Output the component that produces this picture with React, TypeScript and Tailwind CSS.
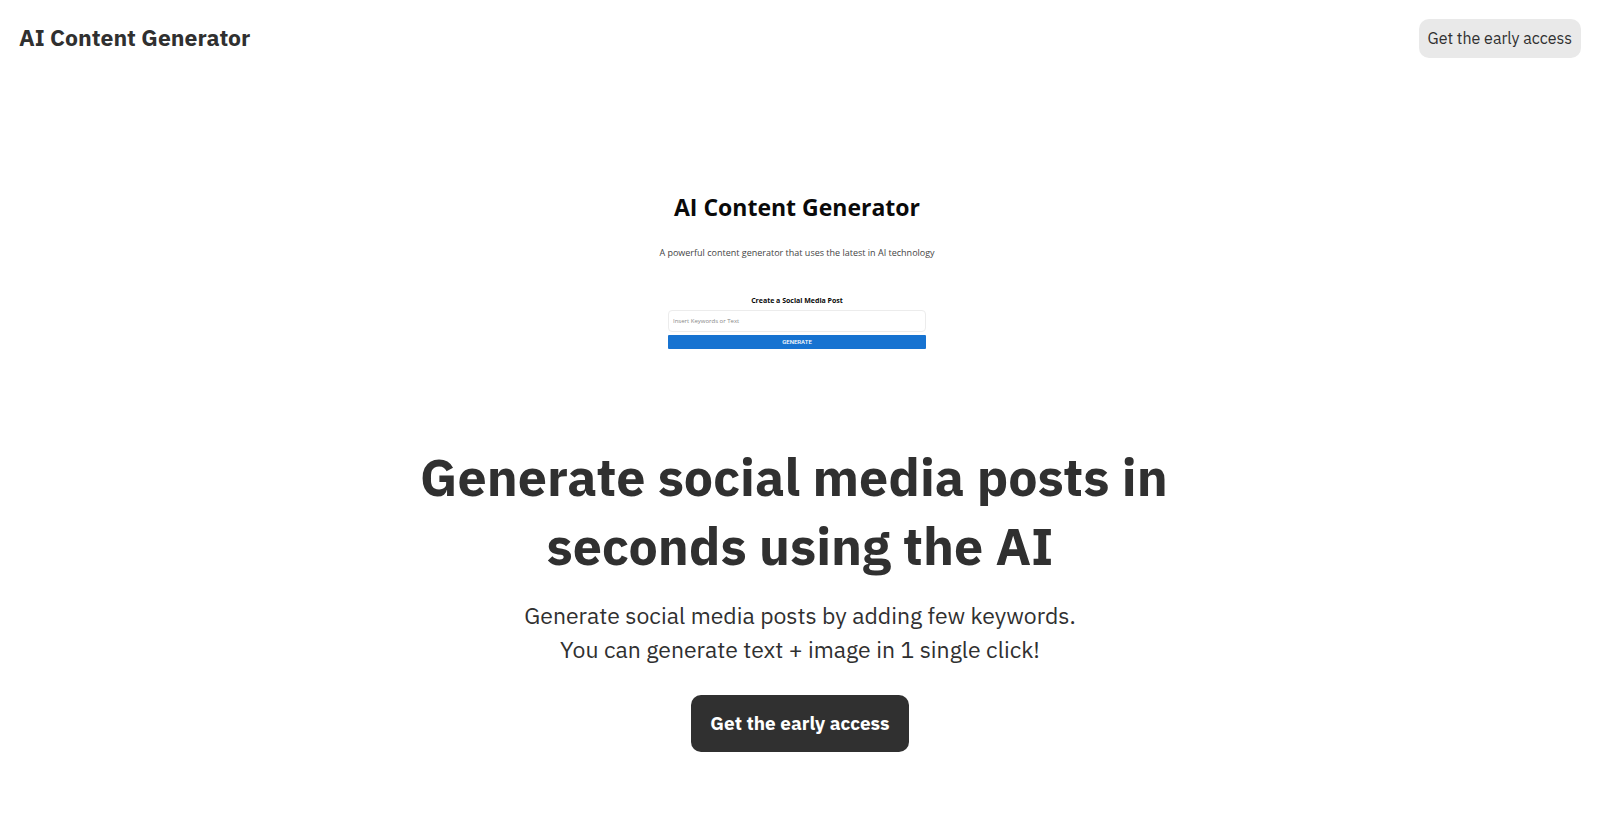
export default function App() {
  return (
    <div className="min-h-screen bg-white font-['IBM_Plex_Sans','Noto_Sans',sans-serif] text-[#303030]">
      <header className="flex items-start justify-between p-[19px]">
        <span className="text-[23px] leading-9 font-bold">AI Content Generator</span>
        <a href="#access" className="rounded-[10px] bg-[#e9e9e9] px-[9px] py-2 text-base leading-[23px]">Get the early access</a>
      </header>
      <main className="flex flex-col items-center px-5 pt-[110px] pb-10 text-center">
        <section className="flex flex-col items-center pr-1.5 font-['Open_Sans','Noto_Sans',sans-serif] text-[#0a0a0a]">
          <h2 className="text-[23px] leading-10 font-bold">AI Content Generator</h2>
          <p className="mt-[18px] text-[9px] leading-4 text-[#444]">A powerful content generator that uses the latest in AI technology</p>
          <form className="mt-[34px] flex w-[258px] flex-col">
            <label htmlFor="keywords" className="text-[7px] leading-3 font-bold">Create a Social Media Post</label>
            <input id="keywords" placeholder="Insert Keywords or Text" className="mt-[3px] h-[22px] rounded-sm border border-[#ececec] px-1 text-[6px] placeholder:text-[#888]" />
            <button type="button" className="mt-[3px] h-3.5 rounded-[1px] bg-[#1773d1] font-['Roboto',sans-serif] text-[6px] leading-3 font-medium text-white">GENERATE</button>
          </form>
        </section>
        <h1 className="mt-[93px] text-[52px] leading-[69px] font-bold">Generate social media posts in&nbsp;<br />seconds using the AI</h1>
        <p className="mt-[18px] text-[23px] leading-[34px]">Generate social media posts by adding few keywords.<br />You can generate text + image in 1 single click!</p>
        <a id="access" href="#access" className="mt-[29px] rounded-[10px] bg-[#303030] px-[19px] py-4 text-[19px] leading-[25px] font-bold text-white">Get the early access</a>
      </main>
    </div>
  );
}
